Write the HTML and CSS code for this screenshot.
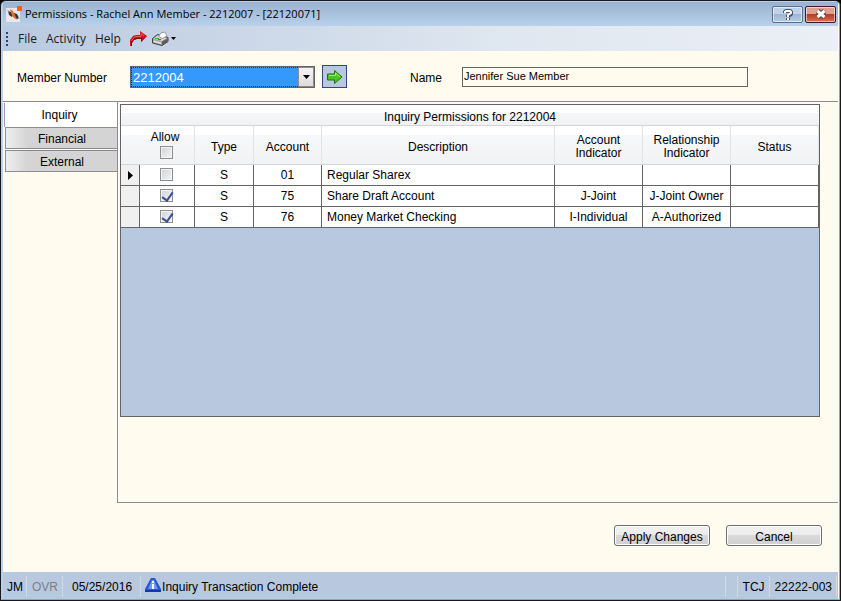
FILE: index.html
```
<!DOCTYPE html>
<html lang="en">
<head>
<meta charset="UTF-8">
<meta name="viewport" content="width=device-width, initial-scale=1.0">
<title>Permissions - Rachel Ann Member</title>
<link rel="stylesheet" href="styles.css">
</head>
<body>
<div class="window">
  <header class="titlebar">
    <svg class="app-icon" viewBox="0 0 16 16" width="16" height="16">
      <path fill="#eee6e4" d="M0 2h14v14H0z"/>
      <path fill="#2b3242" d="M2 5l3 1 2 3-1 2-3-2zM8 7l3 1 2 4-2 1-3-2z"/>
      <path fill="#8b90a0" d="M1 4l3 1-1 2zM12 10l2 3-2-1z"/>
      <path fill="#ee6a1e" d="M4 3l3 2 2 4 2 5-4-3-2-4z"/>
      <path fill="#f4620e" d="M11 0h5v5h-5z"/>
    </svg>
    <h1>Permissions - Rachel Ann Member - 2212007 - [22120071]</h1>
    <button class="win-btn help" aria-label="Help">
      <svg viewBox="0 0 12 13" width="12" height="13">
        <path fill="none" stroke="#46536a" stroke-width="4" stroke-linejoin="round" d="M3 5V4l1-1h4l1 1v2L6 8v1M6 10v2"/>
        <path fill="none" stroke="#fff" stroke-width="2" d="M3 5V4l1-1h4l1 1v1L6 7v2M6 10v2"/>
      </svg>
    </button>
    <button class="win-btn close" aria-label="Close">
      <svg viewBox="0 0 12 10" width="12" height="10">
        <path stroke="#4e3a44" stroke-width="5" d="M2.500 2l7 6M9.500 2l-7 6"/>
        <path stroke="#fff" stroke-width="3" d="M2.500 2l7 6M9.500 2l-7 6"/>
      </svg>
    </button>
  </header>

  <nav class="menubar">
    <span class="grip"></span>
    <button>File</button>
    <button>Activity</button>
    <button>Help</button>
    <button class="tool" aria-label="Go">
      <svg viewBox="0 0 17 16" width="17" height="16">
        <path fill="#c8141a" d="M0 15V9l3-4 3-1h4V0l7 5-6 6V8H7L4 9l-2 3v3z"/>
        <path fill="#7e1014" d="M11 11V8H7L4 9l-2 3v3H1v-4l3-4h8v2l5-4z"/>
        <path fill="none" stroke="#ee5a5c" d="M1.500 10L4 6.500 6 5.500h5V2.500L14 5"/>
      </svg>
    </button>
    <button class="tool print" aria-label="Print">
      <svg viewBox="0 0 17 16" width="17" height="16">
        <path fill="#a8a8a8" stroke="#3c3c3c" d="M.5 7.500l5-4 10.500 3v4L10 14.500.5 12z"/>
        <path fill="#d4d4d4" d="M1.500 7.500l4.500-3 9 2.500L10 10z"/>
        <path fill="#fff" stroke="#777" stroke-width=".7" d="M6.500 5.500L9 2l4-1 2 4L10.500 7.500z"/>
        <path fill="#5c5c5c" d="M10 10.500l5.500-3v3L10 14z"/>
        <path fill="#e4e4e4" d="M1.500 9.500l7.500 2V13l-7.500-2z"/>
        <path fill="#18c431" d="M3 7h4v1H3z"/>
        <path fill="#e5342d" d="M6 8h3v1H6z"/>
      </svg>
      <svg class="drop" viewBox="0 0 5 3" width="5" height="3"><path d="M0 0h5L2.500 3z"/></svg>
    </button>
  </nav>

  <form class="search">
    <label for="member">Member Number</label>
    <div class="combo">
      <select id="member"><option>2212004</option></select>
      <span class="combo-arrow"><svg viewBox="0 0 7 4" width="7" height="4"><path d="M0 0h7L3.500 4z"/></svg></span>
    </div>
    <button type="button" class="go" aria-label="Load member">
      <svg viewBox="0 0 18 16" width="18" height="16">
        <path fill="#47c61c" stroke="#23720f" d="M1.500 5h7V1.500L16 8l-7.500 6.500V11h-7z"/>
        <path fill="none" stroke="#a5ec7c" d="M3 6.500h6.500V4L14 8"/>
      </svg>
    </button>
    <label for="name" class="name-label">Name</label>
    <input id="name" type="text" value="Jennifer Sue Member" readonly>
  </form>

  <main class="content">
    <div class="tabs">
      <button class="tab active">Inquiry</button>
      <button class="tab">Financial</button>
      <button class="tab">External</button>
    </div>
    <section class="panel">
      <div class="grid">
        <table>
          <caption>Inquiry Permissions for 2212004</caption>
          <colgroup>
            <col class="c-mark"><col class="c-allow"><col class="c-type"><col class="c-account">
            <col><col class="c-ind"><col class="c-ind"><col class="c-ind">
          </colgroup>
          <thead>
            <tr>
              <th></th>
              <th class="allow"><label for="all">Allow</label><input type="checkbox" id="all"></th>
              <th>Type</th>
              <th>Account</th>
              <th>Description</th>
              <th>Account<br>Indicator</th>
              <th>Relationship<br>Indicator</th>
              <th>Status</th>
            </tr>
          </thead>
          <tbody>
            <tr>
              <td class="mark"><svg viewBox="0 0 5 9" width="5" height="9"><path d="M0 0l5 4.500L0 9z"/></svg></td>
              <td><input type="checkbox" aria-label="Allow 01"></td>
              <td>S</td><td>01</td><td class="desc">Regular Sharex</td><td></td><td></td><td></td>
            </tr>
            <tr>
              <td class="mark"></td>
              <td><input type="checkbox" aria-label="Allow 75" checked></td>
              <td>S</td><td>75</td><td class="desc">Share Draft Account</td><td>J-Joint</td><td>J-Joint Owner</td><td></td>
            </tr>
            <tr>
              <td class="mark"></td>
              <td><input type="checkbox" aria-label="Allow 76" checked></td>
              <td>S</td><td>76</td><td class="desc">Money Market Checking</td><td>I-Individual</td><td>A-Authorized</td><td></td>
            </tr>
          </tbody>
        </table>
      </div>
    </section>
  </main>

  <div class="actions">
    <button>Apply Changes</button>
    <button>Cancel</button>
  </div>

  <footer class="statusbar">
    <span class="user">JM</span>
    <span class="off">OVR</span>
    <span class="date">05/25/2016</span>
    <span class="message">
      <svg viewBox="0 0 16 16" width="16" height="16">
        <path fill="#2456d8" d="M6 1h4l6 11v3H0v-3z"/>
        <path fill="#123a9e" d="M0 13h16v2H0z"/>
        <path fill="#6f9bf5" d="M7 3h2l4 9H3z"/>
        <path fill="#fff" d="M7 4h2v2H7zM7 7h2v5H7z"/>
      </svg>Inquiry Transaction Complete
    </span>
    <span class="blank"></span>
    <span>TCJ</span>
    <span>22222-003</span>
  </footer>
</div>
</body>
</html>
```
FILE: styles.css
```
:root { --cream:#fffbef; --blue:#b8c9df; --line:#646464; --soft-line:#8c8c94; --ui:'Open Sans','Noto Sans',sans-serif; --form:'Liberation Sans',Arial,sans-serif; }
* { margin:0; padding:0; box-sizing:border-box; }
body { background:#000; font-family:var(--form); font-size:12px; line-height:16px; color:#000; }
button,input,select { font:inherit; color:inherit; }
.window { min-height:100vh; display:flex; flex-direction:column; background:var(--cream); border:1px solid #17171c; border-radius:6px 6px 0 0; padding:1px 2px; box-shadow:inset -1px -1px 0 #3fc4f0,inset 2px 1px 0 #b9d1ea; overflow:hidden; }

/* title bar */
.titlebar { display:flex; align-items:center; height:24px; padding:0 2px 0 3px; background:linear-gradient(#98b2d1,#b9d1ea); font-family:var(--ui); }
.titlebar h1 { flex:1; margin-left:3px; font-size:11px; font-weight:400; white-space:nowrap; }
.win-btn { display:flex; align-items:center; justify-content:center; width:31px; height:17px; margin-left:2px; border:1px solid #5b6f8d; border-radius:2px; box-shadow:inset 0 0 0 1px rgba(255,255,255,0.55); background:linear-gradient(#c0d2e8 50%,#9db6d3 50%,#b7cde5); }
.win-btn.close { border-color:#471420; background:linear-gradient(#e0a08f 50%,#b83a22 50%,#d3735c); }

/* menu bar */
.menubar { display:flex; align-items:center; height:25px; padding-left:3px; background:linear-gradient(90deg,#b9c9e0,#dfe7f0 60%,#ebeff6); font-family:var(--ui); }
.menubar button { border:none; background:none; margin-right:9px; color:#1c1c1c; }
.grip { width:2px; height:14px; margin-right:10px; background:repeating-linear-gradient(#2d466f 0 2px,transparent 2px 4px); }
.menubar .tool { display:flex; align-items:center; margin-right:5px; }
.tool .drop { margin-left:2px; }

/* member lookup */
.search { display:flex; align-items:center; height:51px; padding:1px 90px 0 14px; border-bottom:1px solid var(--soft-line); }
.search label { width:113px; padding-top:2px; }
.combo { position:relative; width:185px; height:22px; }
.combo select { appearance:none; width:100%; height:100%; padding:2px 0 0 2px; border:1px solid var(--line); border-radius:0; background:#3399ff; color:#fff; font-size:13px; outline:1px dotted #1c2c44; outline-offset:-2px; }
.combo-arrow { position:absolute; top:1px; right:1px; width:16px; height:20px; display:flex; align-items:center; justify-content:center; border:1px solid #8c8c8c; background:linear-gradient(#f4f4f4,#dcdcdc); pointer-events:none; }
.go { display:flex; align-items:center; justify-content:center; width:25px; height:23px; margin-left:7px; border:1px solid #2f4a75; background:var(--blue); }
.search .name-label { width:52px; margin-left:63px; }
.search input { flex:1; min-width:0; height:20px; padding:0 1px 1px; border:1px solid var(--line); background:var(--cream); font-size:11px; }

/* tabs + panel */
.content { flex:1; display:flex; }
.tabs { width:114px; padding:1px 0 0 1px; }
.tab { display:block; width:113px; height:22px; margin:0 0 1px 1px; padding-top:2px; border:1px solid var(--soft-line); border-right:none; background:linear-gradient(90deg,#eee,#d4d4d4 20%); }
.tab.active { height:24px; margin:0; padding:0 3px 0 0; border:none; border-left:1px solid #9c9ca4; background:#fff; }
.panel { flex:1; min-width:0; display:flex; padding:2px 18px 85px 2px; border-left:1px solid var(--soft-line); border-bottom:1px solid var(--soft-line); }
.grid { flex:1; min-width:0; border:1px solid var(--line); background:var(--blue); }

/* permissions table */
table { width:100%; table-layout:fixed; border-collapse:separate; border-spacing:0; }
.c-mark { width:19px; }
.c-allow { width:55px; }
.c-type { width:59px; }
.c-account { width:68px; }
.c-ind { width:88px; }
caption { height:21px; padding-top:4px; line-height:16px; background:linear-gradient(#fff 40%,#f6f7f8 40%,#f0f1f3); border-bottom:1px solid #d5d5d8; }
th { height:39px; font-weight:400; line-height:13px; vertical-align:middle; background:linear-gradient(#fff 25%,#f7f8fa 25%,#f1f2f4); border-right:1px solid #e2e3e6; border-bottom:1px solid #d5d5d8; padding-top:4px; }
th:first-child { border-right:none; }
th.allow { padding-top:0; }
.allow label { display:block; margin-bottom:2px; padding-right:4px; }
td { height:21px; text-align:center; line-height:16px; background:#fff; border-right:1px solid var(--line); border-bottom:1px solid var(--line); white-space:nowrap; }
td.mark { background:#f0f0f0; }
td.desc { text-align:left; padding-left:5px; }
input[type=checkbox] { appearance:none; display:block; position:relative; width:13px; height:13px; margin:0 20px; border:1px solid #8e8f8f; background:linear-gradient(135deg,#cfd2d8,#f6f6f6); box-shadow:inset 0 0 0 1px #f4f4f4; }
td input[type=checkbox] { margin-bottom:2px; }
input[type=checkbox]:checked::after { content:''; position:absolute; left:3px; top:0; width:5px; height:9px; border:solid #3a4f94; border-width:0 2px 2px 0; transform:rotate(35deg); }
.mark svg { display:block; margin:0 0 0 7px; }

/* buttons */
.actions { display:flex; justify-content:flex-end; gap:16px; padding:22px 16px 26px; }
.actions button { width:96px; height:21px; padding-top:2px; border:1px solid #707070; border-radius:3px; box-shadow:inset 0 0 0 1px #fcfcfc; background:linear-gradient(#f2f2f2,#ebebeb 50%,#dadada 50%,#cfcfcf); white-space:nowrap; }

/* status bar */
.statusbar { display:flex; align-items:center; height:27px; padding:2px 1px 0 0; background:var(--blue); }
.statusbar span { height:21px; padding:3px 4px 0 5px; border-right:1px solid #d3d9e0; white-space:nowrap; }
.statusbar .user { padding:3px 3px 0 4px; }
.statusbar .off { color:#7b8088; }
.statusbar .date { padding:3px 8px 0 9px; }
.statusbar .message { flex:1; display:flex; gap:1px; padding-left:4px; }
.statusbar .message svg { margin-top:-2px; }
.statusbar .blank { width:12px; padding:0; }
```
